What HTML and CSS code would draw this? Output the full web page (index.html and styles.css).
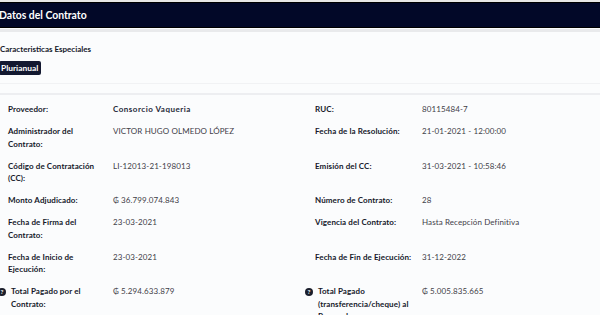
FILE: index.html
```html
<!DOCTYPE html>
<html lang="es">
<head>
<meta charset="utf-8">
<link rel="stylesheet" href="styles.css">
</head>
<body>
<div class="page">
  <div class="topline"></div>
  <div class="header"><h1 class="title">Datos del Contrato</h1></div>
  <div class="strip"></div>
  <section class="special">
    <h2 class="special-title">Caracteristicas Especiales</h2>
    <span class="badge">Plurianual</span>
  </section>
  <div class="sep thin"></div>
  <div class="sep"></div>
  <div class="grid">
    <div class="label">Proveedor:</div>
    <div class="value strong">Consorcio Vaqueria</div>
    <div class="label">RUC:</div>
    <div class="value">80115484-7</div>

    <div class="label">Administrador del Contrato:</div>
    <div class="value">VICTOR HUGO OLMEDO LÓPEZ</div>
    <div class="label">Fecha de la Resolución:</div>
    <div class="value">21-01-2021 - 12:00:00</div>

    <div class="label">Código de Contratación (CC):</div>
    <div class="value">LI-12013-21-198013</div>
    <div class="label">Emisión del CC:</div>
    <div class="value">31-03-2021 - 10:58:46</div>

    <div class="label">Monto Adjudicado:</div>
    <div class="value">₲ 36.799.074.843</div>
    <div class="label">Número de Contrato:</div>
    <div class="value">28</div>

    <div class="label">Fecha de Firma del Contrato:</div>
    <div class="value">23-03-2021</div>
    <div class="label">Vigencia del Contrato:</div>
    <div class="value">Hasta Recepción Definitiva</div>

    <div class="label">Fecha de Inicio de Ejecución:</div>
    <div class="value">23-03-2021</div>
    <div class="label">Fecha de Fin de Ejecución:</div>
    <div class="value">31-12-2022</div>

    <div class="label help"><svg class="qicon" viewBox="0 0 10 10"><circle cx="5" cy="5" r="5" fill="#1b1e2c"/><text x="5" y="8" text-anchor="middle" font-size="8" font-weight="700" fill="#fff" font-family="Lato, sans-serif">?</text></svg><span>Total Pagado por el Contrato:</span></div>
    <div class="value">₲ 5.294.633.879</div>
    <div class="label help"><svg class="qicon" viewBox="0 0 10 10"><circle cx="5" cy="5" r="5" fill="#1b1e2c"/><text x="5" y="8" text-anchor="middle" font-size="8" font-weight="700" fill="#fff" font-family="Lato, sans-serif">?</text></svg><span>Total Pagado (transferencia/cheque) al Proveedor:</span></div>
    <div class="value">₲ 5.005.835.665</div>
  </div>
</div>
</body>
</html>
```

FILE: styles.css
```css
* { box-sizing: border-box; }
html, body { margin: 0; padding: 0; }
body {
  background: #fbfcfd;
  font-family: Lato, "DejaVu Sans", sans-serif;
  color: #1b1e2c;
  width: 600px;
  height: 315px;
  overflow: hidden;
}
.page { width: 600px; }
.topline { height: 2px; background: #e8e8e6; }
.header {
  height: 26px;
  background: #020828;
  border-top: 1px solid #000;
  border-bottom: 1px solid #000;
  display: flex;
  align-items: center;
}
.title {
  margin: -1px 0 0 -1px;
  font-size: 10.4px;
  font-weight: 700;
  color: #fff;
}
.strip { height: 3px; background: #e9eaec; margin-top: 1px; }
.special {
  display: flex;
  flex-direction: column;
  align-items: flex-start;
  padding-top: 11px;
}
.special-title {
  margin: 0;
  font-size: 8px;
  font-weight: 700;
  line-height: 12px;
  color: #15182a;
}
.badge {
  margin-top: 6px;
  margin-left: -1px;
  background: #121830;
  color: #fff;
  font-size: 8.4px;
  font-weight: 700;
  line-height: 14px;
  padding: 0 3px 0 2px;
  border-radius: 2px;
}
.sep { height: 2px; background: #edeef1; margin-top: 9px; }
.sep.thin { height: 1px; background: #f1f2f4; margin-top: 8px; }
.grid {
  display: grid;
  grid-template-columns: 105px 202px 107px 1fr;
  padding: 3.5px 0 0 8px;
  align-items: start;
}
.label, .value {
  font-size: 8px;
  line-height: 12.5px;
  padding: 4.75px 0 4.75px;
}
.label { font-weight: 700; color: #15182a; padding-right: 6px; letter-spacing: 0.1px; }
.value { color: #3f4048; letter-spacing: 0.1px; }
.value.strong { font-weight: 700; color: #262939; letter-spacing: 0.5px; }
.help { display: flex; align-items: flex-start; padding-left: 3px; }
.qicon {
  width: 8px;
  height: 8px;
  flex: none;
  margin: 2.5px 5px 0 -13px;
}
```
